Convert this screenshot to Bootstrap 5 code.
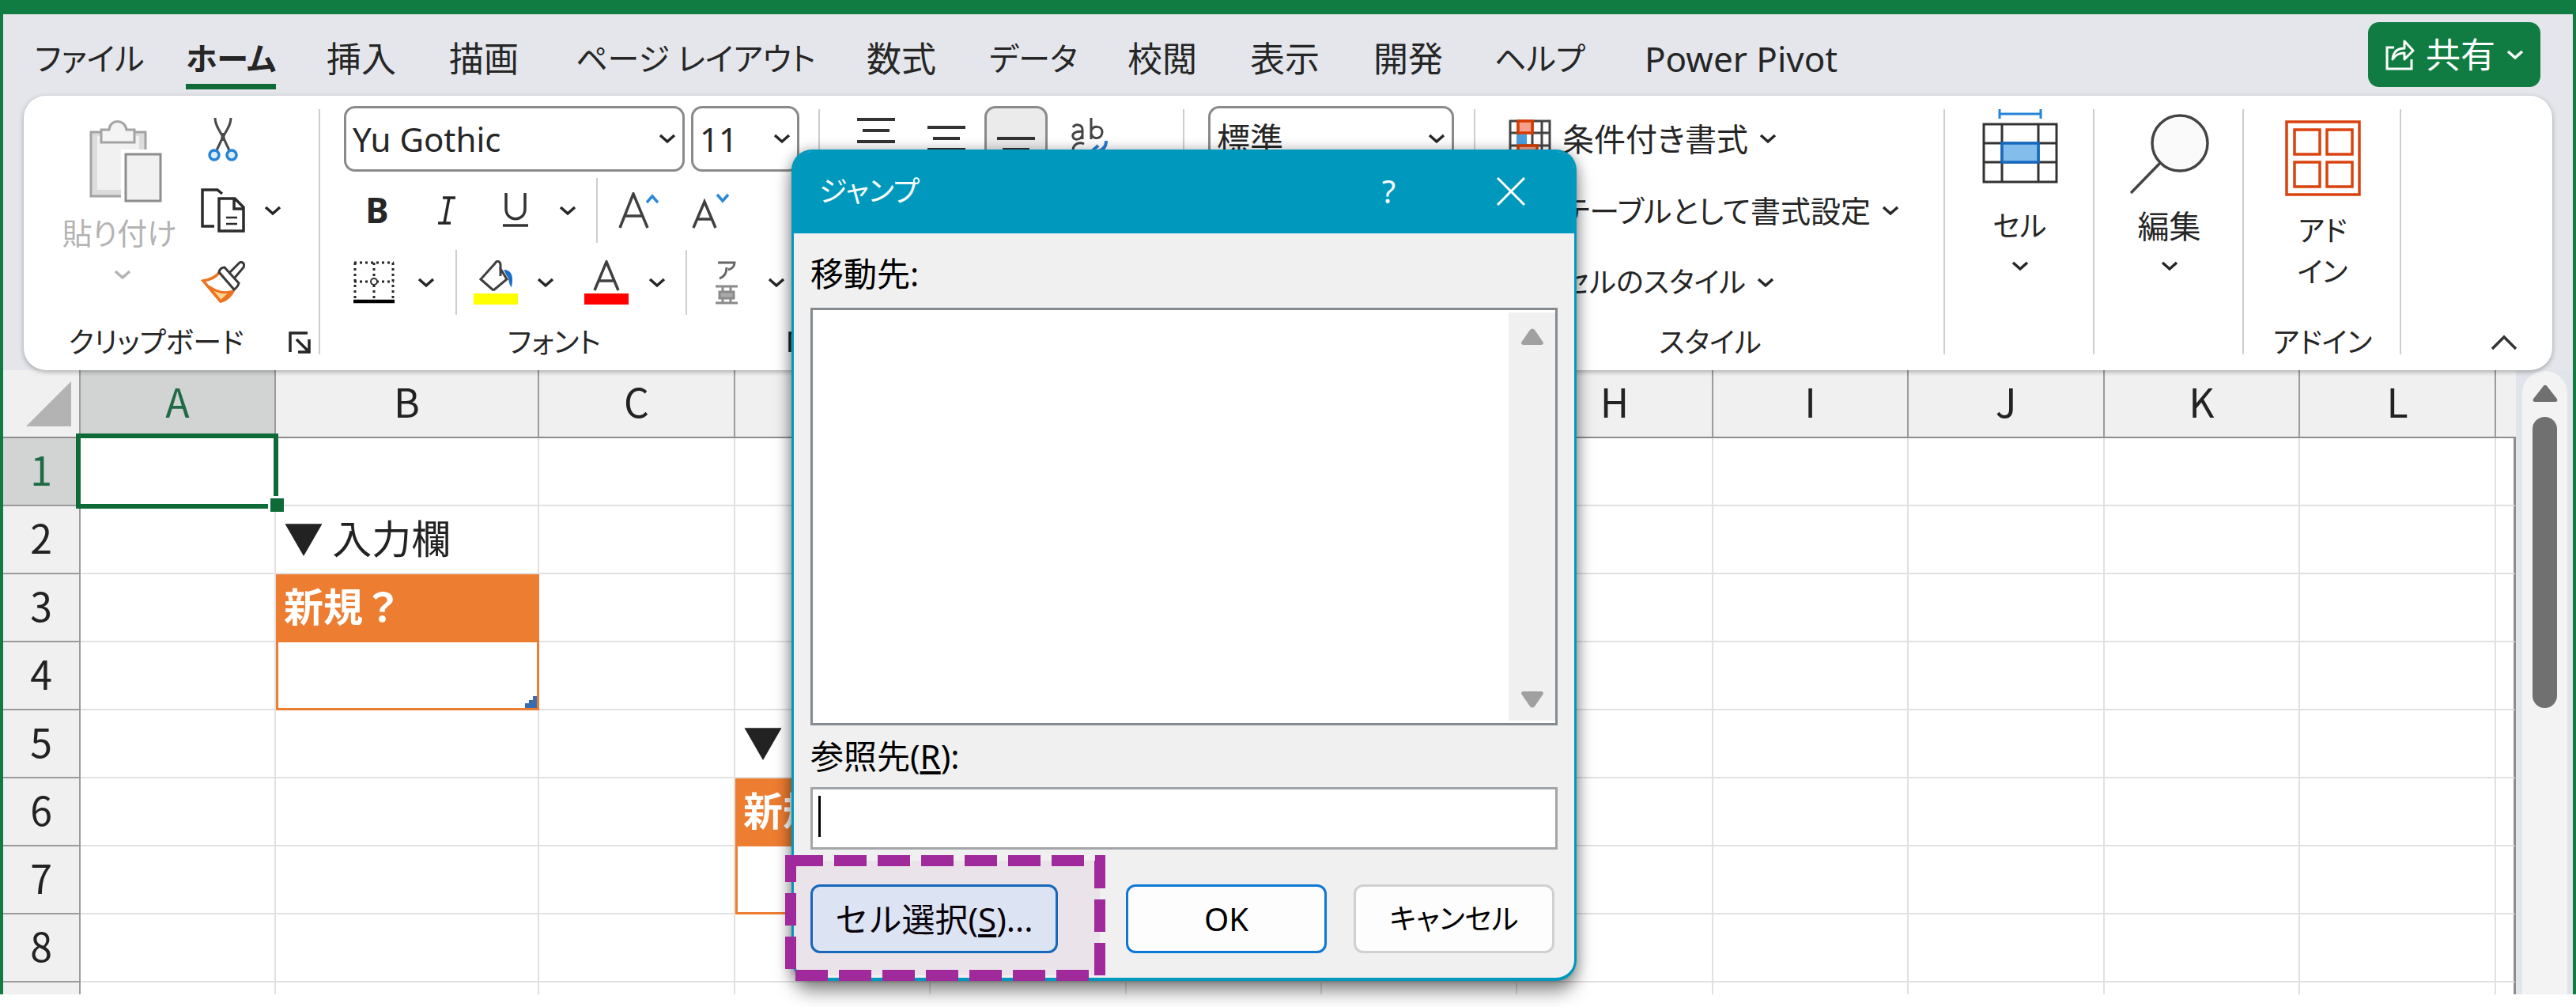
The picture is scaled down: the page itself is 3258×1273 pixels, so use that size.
<!DOCTYPE html>
<html lang="ja">
<head>
<meta charset="utf-8">
<meta name="viewport" content="width=device-width, initial-scale=1">
<title>Excel - ジャンプ</title>
<link rel="stylesheet" href="https://cdn.jsdelivr.net/npm/bootstrap@5.3.0/dist/css/bootstrap.min.css">
<script src="https://cdn.jsdelivr.net/npm/bootstrap@5.3.0/dist/js/bootstrap.bundle.min.js"></script>
<style>
body{font-family:"Noto Sans","Noto Sans CJK JP",sans-serif;font-size:40px;line-height:48px;color:#262626;background:#fff;font-feature-settings:"palt"}
button,select,input{font:inherit;color:inherit;font-feature-settings:inherit}
button{background:none;border:0;padding:0}
svg{display:block;flex:none}
.kana{font-size:36px}
.app-shell{border:4px solid #107c41;border-top-width:18px;border-bottom:0;background:#e4e6ec}
/* tab strip */
.tab-strip{height:103px;padding-right:41px}
.tab-grid{display:grid;flex:1;padding-left:40px;font-size:44px;line-height:52px;grid-template-columns:minmax(0,191fr) minmax(0,178fr) minmax(0,155fr) minmax(0,160fr) minmax(0,368fr) minmax(0,155fr) minmax(0,175fr) minmax(0,155fr) minmax(0,156fr) minmax(0,153fr) minmax(0,190fr) minmax(0,915fr)}
.tab-grid a{color:#262626;text-decoration:none;white-space:nowrap;justify-self:start;border-bottom:7px solid transparent;padding-bottom:6px;margin-top:6px}
.tab-grid a.active{font-weight:700;border-color:#0e6b38}
.tab-grid .kana{font-size:40px}
.share-btn{width:218px;height:82px;margin-top:10px;background:#107c41;color:#fff;border-radius:14px;font-size:44px;gap:14px}
/* ribbon */
.ribbon{margin:0 26px;height:347px;background:#fff;border-radius:28px;box-shadow:0 2px 6px rgba(0,0,0,.3);display:grid;grid-template-columns:375fr 632fr 461fr 368fr 594fr 189fr 189fr 199fr 191fr;position:relative;z-index:1}
.rgroup{padding:13px 0 0 30px;min-width:0;display:grid;grid-template-rows:83px 98px 84px 68px;background:linear-gradient(#cdcdcd,#cdcdcd) right 17px/2px 310px no-repeat}
.rgroup:last-child{background:none}
.rgroup>*{min-width:0}
.rlabel{display:flex;align-items:center;justify-content:center;margin-left:-30px;grid-row:4;white-space:nowrap}
.rlabel .launcher{margin-right:12px}
.rlabel .collapse-btn{margin-right:44px}
.rlabel span{flex:1;text-align:center}
.tool-row{display:grid;align-items:center;justify-items:center}
.clip-grid{grid-row:1/4;display:grid;grid-template-columns:182px 80px 46px;grid-template-rows:83px 98px 84px;align-items:center;justify-items:center}
.paste-btn{grid-row:1/4;align-self:start;padding-top:18px;color:#b3b3b3;white-space:nowrap}
.paste-btn svg:first-child{margin-left:16px}
.paste-btn span{margin-top:14px;font-size:38px}
.paste-btn .chev{margin:23px 0 0 8px}
.row-format{grid-template-columns:84px 92px 82px 50px 24px 82px 100px}
.row-color{grid-template-columns:76px 56px 20px 79px 48px 106px 22px 52px 49px 78px}
.row-format b{font-size:44px}
.vsep{width:2px;height:82px;background:#cdcdcd}
.combo{appearance:none;height:83px;border:3px solid #8a8a8a;border-radius:14px;padding:0 8px;font-size:42px;background:#fff url("data:image/svg+xml,%3Csvg xmlns='http://www.w3.org/2000/svg' width='22' height='13'%3E%3Cpath d='M2 2l9 8 9-8' fill='none' stroke='%23262626' stroke-width='3.5'/%3E%3C/svg%3E") right 8px center/22px 13px no-repeat}
.combo-font{width:431px}
.combo-size{width:137px}
.combo-number{width:311px}
.align-group{padding-left:26px}
.align-row{grid-template-columns:89px 89px 88px 96px;justify-content:start}
.align-on{width:80px;height:83px;border:3px solid #8a8a8a;border-radius:14px;background:#ebebeb}
.style-btn{display:flex;align-items:center;gap:14px;padding-left:12px;white-space:nowrap}
.table-style{font-size:38px}
.big-tool{grid-row:1/4;align-self:start;display:flex;flex-direction:column;align-items:center;margin-left:-30px;white-space:nowrap;padding-top:4px}
.big-tool span{margin-top:30px}
.big-tool .chev{margin-top:20px}
.big-find{padding-top:10px}
.big-find span{margin-top:16px}
.big-addin{padding-top:18px}
.big-addin span{margin-top:18px;line-height:52px}
/* sheet */
.sheet-area{height:789px;overflow:hidden}
.sheet-wrap{flex:1;min-width:0;background:#fff;overflow:hidden}
.sheet{width:100%;table-layout:fixed;border-collapse:separate;border-spacing:0;font-family:"Noto Sans CJK JP",sans-serif;font-size:50px;line-height:60px;color:#222;font-feature-settings:normal}
.sheet th,.sheet td{height:86px;padding:0 10px 8px;border-right:2px solid #e1e1e1;border-bottom:2px solid #e1e1e1;white-space:nowrap;overflow:visible}
.sheet th{background:#f0f0f0;font-weight:400;text-align:center;padding:0 0 8px;border-color:#9b9b9b}
.sheet th.corner{padding:0 0 0 29px}
.sheet tr:first-child th{border-bottom-color:#8d8d8d}
.sheet td:last-child{border-right:3px solid #8d8d8d}
.sheet tr:first-child th:last-child{border-right:0}
.sheet .on{background:#d2d4d3;color:#1e6b45}
.sheet td.hd{background:#ed7d31;color:#fff;font-weight:700;border-color:#ed7d31;overflow:hidden}
.sheet td.bd{border:3px solid #ed7d31;border-top:0}
.cell-sel{position:relative}
.cell-sel::before{content:"";position:absolute;inset:-6px -5px -5px -6px;border:6px solid #0e6b38}
.cell-sel::after{content:"";position:absolute;right:-12px;bottom:-9px;width:20px;height:20px;background:#0e6b38;border:solid #fff;border-width:3px 0 0 3px}
.resize-mark{position:relative}
.resize-mark svg{position:absolute;right:0;bottom:0}
.vscroll{width:72px;background:#e1e4ea;padding:1px 7px 0 8px}
.vtrack{height:820px;background:#f3f3f3;border-radius:28px 28px 0 0;padding-top:17px}
.vthumb{width:31px;height:368px;border-radius:16px;background:#6f706f;margin-top:18px}
/* dialog */
.jump{position:absolute;left:1001px;top:189px;width:993px;z-index:5;background:#f0f0f0;border:3px solid #0099bd;border-bottom-width:4px;border-radius:26px;box-shadow:0 14px 22px rgba(0,0,0,.42),0 0 16px rgba(0,0,0,.25);color:#000}
.jump-head{height:103px;background:#0099bd;color:#fff;border-radius:22px 22px 0 0;padding:0 62px 4px 32px;gap:128px}
.jump-body{padding:22px 21px 31px}
.jump-body label{display:block;height:58px;line-height:58px;font-feature-settings:normal;font-size:42px}
.list-frame{height:528px;border:3px solid #858a8f;background:#fff;margin-top:14px;padding:3px 0}
.list-frame select{flex:1;border:0;background:#fff;outline:0}
.list-bar{width:59px;background:#f0f0f0;padding:20px 0 16px}
.ref-wrap{position:relative;margin-top:10px}
.ref-box{width:100%;height:79px;border:3px solid #a3a6a9;background:#fff;padding:0 8px;border-radius:0;outline:0}
.ref-caret{position:absolute;left:10px;top:11px;width:3px;height:52px;background:#000}
.ref-label{margin-top:10px}
.jump-actions{margin-top:44px}
.dlg-btn{height:87px;width:254px;border:3px solid #d0d0d0;border-radius:12px;background:#fdfdfd;white-space:nowrap}
.dlg-btn.main{border-color:#0f78d4;margin-left:86px;margin-right:34px}
.dlg-btn.special{width:313px;border-color:#0f6cbd;background:#e1f0f9;font-size:42px;font-feature-settings:normal}
.callout{position:absolute;left:993px;top:1081px;z-index:6;pointer-events:none}
</style>
</head>
<body>
<svg width="0" height="0" class="position-absolute" aria-hidden="true">
<symbol id="chev" viewBox="0 0 22 13"><path d="M2 2l9 8 9-8" fill="none" stroke="currentColor" stroke-width="3.5"/></symbol>
<symbol id="launch" viewBox="0 0 28 28"><path d="M2 26V2h22M10 10l14 14M26 10v16H12" fill="none" stroke="#262626" stroke-width="3.5"/></symbol>
</svg>
<div class="app-shell">
<nav class="tab-strip d-flex align-items-start">
 <div class="tab-grid pt-4">
  <a href="#" class="kana">ファイル</a><a href="#" class="kana active">ホーム</a><a href="#">挿入</a><a href="#">描画</a><a href="#" class="kana">ページ レイアウト</a><a href="#">数式</a><a href="#" class="kana">データ</a><a href="#">校閲</a><a href="#">表示</a><a href="#">開発</a><a href="#" class="kana">ヘルプ</a><a href="#">Power Pivot</a>
 </div>
 <button class="share-btn d-flex align-items-center justify-content-center"><svg width="38" height="42" viewBox="0 0 38 42" fill="none" stroke="#fff" stroke-width="3"><path d="M12 12H3v27h31V27"/><path d="M10 27c1-10 7-14 15-14V4l11 12-11 11v-8c-7 0-11 2-15 8z" stroke-linejoin="round"/></svg>共有<svg width="22" height="13"><use href="#chev"/></svg></button>
</nav>
<div class="ribbon">
 <section class="rgroup">
  <div class="clip-grid">
   <button class="paste-btn d-flex flex-column align-items-center" disabled><svg width="92" height="104" viewBox="0 0 92 104"><path d="M2 15h69v81H2z" fill="#dcdcdc" stroke="#a3a3a3" stroke-width="3"/><path d="M10 20h53v68H10z" fill="#f1f1f1"/><path d="M15 28V12h10c1-14 20-14 22 0h10v16z" fill="#f4f4f4" stroke="#a3a3a3" stroke-width="3"/><path d="M40 37h52v67H40z" fill="#fff"/><path d="M46 43h44v59H46z" fill="#f1f1f1" stroke="#8d8d8d" stroke-width="3"/></svg><span>貼り付け</span><svg class="chev" width="22" height="13"><use href="#chev"/></svg></button>
   <button aria-label="切り取り"><svg width="38" height="56" viewBox="0 0 38 56" fill="none" stroke="#4a4a4a" stroke-width="3"><path d="M9 1c0 9 5 15 10 24l8 17M29 1c0 9-5 15-10 24l-8 17"/><path d="M19 20v10" stroke-width="5"/><circle cx="8" cy="48" r="6" fill="#dcecf9" stroke="#2484d6" stroke-width="3.5"/><circle cx="30" cy="48" r="6" fill="#dcecf9" stroke="#2484d6" stroke-width="3.5"/></svg></button><i></i>
   <button aria-label="コピー"><svg width="56" height="56" viewBox="0 0 56 56" fill="none" stroke="#2b2b2b" stroke-width="3.5"><path d="M17 48H2V2h19l6 5"/><path d="M23 13h20l11 11v30H23zM42 13v13h12"/><path d="M32 37h14M32 45h14" stroke-width="2.5"/></svg></button><svg width="22" height="13"><use href="#chev"/></svg>
   <button aria-label="書式のコピー"><svg width="56" height="54" viewBox="0 0 56 54"><path d="M24 14C18 21 10 24 3 25l22 26c9-2 14-8 18-17z" fill="#fff" stroke="#ed7323" stroke-width="3.5"/><path d="M10 32l15 19 14-13c-9 4-19 1-29-6z" fill="#fbd58e" stroke="#ed7323" stroke-width="3"/><path d="M30 8l18 20c-1 4-3 6-6 8L23 14c1-4 4-6 7-6zM36 15L49 2c4-2 7 2 5 6L43 21" fill="#fff" stroke="#3a3a3a" stroke-width="3"/></svg></button>
  </div>
  <div class="rlabel kana"><span>クリップボード</span><button class="launcher" aria-label="クリップボードの設定"><svg width="28" height="28"><use href="#launch"/></svg></button></div>
 </section>
 <section class="rgroup">
  <div class="d-flex gap-2">
   <select class="combo combo-font" aria-label="フォント名"><option>Yu Gothic</option></select>
   <select class="combo combo-size" aria-label="サイズ"><option>11</option></select>
  </div>
  <div class="tool-row row-format"><button><b>B</b></button><button aria-label="斜体"><svg width="24" height="36" viewBox="0 0 24 36"><path d="M7 2h16M1 34h16M15 2L9 34" fill="none" stroke="#262626" stroke-width="3.5"/></svg></button><button aria-label="下線"><svg width="32" height="44" viewBox="0 0 32 44"><path d="M4 0v20c0 17 24 17 24 0V0M0 41h32" fill="none" stroke="#333" stroke-width="3.5"/></svg></button><svg width="22" height="13"><use href="#chev"/></svg><span class="vsep"></span>
   <button aria-label="フォント サイズの拡大"><svg width="52" height="46" viewBox="0 0 52 46" fill="none" stroke="#404040" stroke-width="3.5"><path d="M2 45L19 2l18 43M8 30h23"/><path d="M36 13l7-8 7 8" stroke="#2b88d8"/></svg></button>
   <button aria-label="フォント サイズの縮小"><svg width="48" height="46" viewBox="0 0 48 46" fill="none" stroke="#404040" stroke-width="3.5"><path d="M2 45l14-33 14 33M7 34h18"/><path d="M32 3l7 8 7-8" stroke="#2b88d8"/></svg></button></div>
  <div class="tool-row row-color">
   <button aria-label="罫線"><svg width="52" height="54" viewBox="0 0 52 54"><path d="M1 2h50M1 26h50" stroke="#262626" stroke-width="3" stroke-dasharray="3 4"/><path d="M2 2v46M26 2v46M50 2v46" stroke="#262626" stroke-width="3" stroke-dasharray="3 4"/><path d="M0 51h52" stroke="#000" stroke-width="4.5"/><circle cx="26" cy="26" r="4" fill="#fff" stroke="#333" stroke-width="2"/></svg></button><svg width="22" height="13"><use href="#chev"/></svg><span class="vsep"></span>
   <button aria-label="塗りつぶしの色"><svg width="56" height="56" viewBox="0 0 56 56"><path d="M25 38L9 24 27 4c3-5 7-2 7 2v14M33 9l9 15-17 14" fill="none" stroke="#404040" stroke-width="3"/><path d="M38 12c10 0 13 8 10 22-4-3-3-12-6-14z" fill="#1a6fc4"/><path d="M0 42h56v14H0z" fill="#ff0"/></svg></button><svg width="22" height="13"><use href="#chev"/></svg>
   <button aria-label="フォントの色"><svg width="56" height="56" viewBox="0 0 56 56"><path d="M13 38L28 2l15 36M19 26h19" fill="none" stroke="#404040" stroke-width="3.5"/><path d="M0 42h56v14H0z" fill="red"/></svg></button><svg width="22" height="13"><use href="#chev"/></svg><span class="vsep"></span>
   <button aria-label="ふりがな"><svg width="28" height="56" viewBox="0 0 28 56" fill="none" stroke="#8a8a8a" stroke-width="3"><path d="M3 3h21c0 5-4 8-8 9M14 9c0 8-3 12-9 14" stroke="#666"/><path d="M0 33h28M0 54h28M9 33v20M19 33v20"/><path d="M5 40h18v8H5z" fill="#aaa"/></svg></button><svg width="22" height="13"><use href="#chev"/></svg></div>
  <div class="rlabel kana"><span>フォント</span><button class="launcher" aria-label="フォントの設定"><svg width="28" height="28"><use href="#launch"/></svg></button></div>
 </section>
 <section class="rgroup align-group">
  <div class="tool-row align-row">
   <button aria-label="上揃え"><svg width="48" height="60" viewBox="0 0 48 60" stroke="#333" stroke-width="4"><path d="M0 5h48M7 19h34M0 33h48"/></svg></button>
   <button aria-label="上下中央揃え"><svg width="48" height="60" viewBox="0 0 48 60" stroke="#333" stroke-width="4"><path d="M0 15h48M7 29h34M0 43h48"/></svg></button>
   <button class="align-on d-flex align-items-center justify-content-center" aria-label="下揃え"><svg width="48" height="60" viewBox="0 0 48 60" stroke="#333" stroke-width="4"><path d="M0 29h48M7 43h34M0 57h48"/></svg></button>
   <button aria-label="折り返し"><svg width="48" height="60" viewBox="0 0 48 60" fill="none" stroke="#444" stroke-width="3"><path d="M4 15c3-5 12-4 12 3v12M16 20C6 20 3 23 4 27s9 5 12-2M27 3v27M27 19c3-7 14-6 14 2s-11 11-14 2M18 36c-6-3-14 0-14 8s8 11 14 8"/><path d="M46 32c0 8-4 14-18 14M36 38l-9 8 9 8" stroke="#2b7cd3" stroke-width="4"/></svg></button></div>
 </section>
 <section class="rgroup"><div><select class="combo combo-number" aria-label="表示形式"><option>標準</option></select></div></section>
 <section class="rgroup">
  <button class="style-btn"><svg width="54" height="50" viewBox="0 0 54 50"><path d="M2 2h50v46H2zM2 17h50M2 33h50M12 2v46M30 2v46M42 2v46" fill="#fff" stroke="#444" stroke-width="3"/><path d="M12 2h18v15H12z" fill="#f4a08c" stroke="#d83b01" stroke-width="3.5"/><path d="M10 19h13v13H10z" fill="#4a9fe0"/><path d="M12 33h24v14H12z" fill="#f4a08c" stroke="#d83b01" stroke-width="3.5"/></svg>条件付き書式<svg width="22" height="13"><use href="#chev"/></svg></button>
  <button class="style-btn table-style"><svg width="54" height="50" viewBox="0 0 54 50"><path d="M2 2h50v46H2zM2 17h50M2 33h50M18 2v46M36 2v46" fill="#fff" stroke="#444" stroke-width="3"/></svg>テーブルとして書式設定<svg width="22" height="13"><use href="#chev"/></svg></button>
  <button class="style-btn kana"><svg width="54" height="50" viewBox="0 0 54 50"><path d="M2 2h50v46H2z" fill="#fff" stroke="#444" stroke-width="3"/></svg>セルのスタイル<svg width="22" height="13"><use href="#chev"/></svg></button>
  <div class="rlabel kana"><span>スタイル</span></div>
 </section>
 <section class="rgroup"><button class="big-tool"><svg width="96" height="94" viewBox="0 0 96 94" fill="none" stroke="#333" stroke-width="3"><path d="M22 6h52M22 0v12M74 0v12" stroke="#2484d6"/><path d="M2 19h92v73H2zM2 43h92M2 67h92M25 19v73M71 19v73"/><path d="M25 43h46v24H25z" fill="#83bdeb" stroke="#1469c0" stroke-width="3.5"/></svg><span class="kana">セル</span><svg class="chev" width="22" height="13"><use href="#chev"/></svg></button></section>
 <section class="rgroup"><button class="big-tool big-find"><svg width="100" height="102" viewBox="0 0 100 102" fill="none" stroke="#444" stroke-width="3.5"><circle cx="63" cy="37" r="35" fill="#fafafa"/><path d="M38 62L1 100"/></svg><span>編集</span><svg class="chev" width="22" height="13"><use href="#chev"/></svg></button></section>
 <section class="rgroup"><button class="big-tool big-addin"><svg width="96" height="96" viewBox="0 0 96 96" fill="none" stroke="#d9430f" stroke-width="3.5"><path d="M2 2h92v92H2zM12 12h32v31H12zM53 12h32v31H53zM12 53h32v31H12zM53 53h32v31H53z"/></svg><span class="kana">アド<br>イン</span></button><div class="rlabel kana"><span>アドイン</span></div></section>
 <section class="rgroup"><div class="rlabel justify-content-end"><button class="collapse-btn" aria-label="リボンを折りたたむ"><svg width="34" height="20" viewBox="0 0 34 20"><path d="M2 18L17 3l15 15" fill="none" stroke="#333" stroke-width="3.5"/></svg></button></div></section>
</div>
<main class="sheet-area d-flex">
 <div class="sheet-wrap">
 <table class="sheet">
  <colgroup><col style="width:98px"><col style="width:247px"><col style="width:333px"><col style="width:248px"><col style="width:247px"><col style="width:248px"><col style="width:247px"><col style="width:247px"><col style="width:248px"><col style="width:247px"><col style="width:248px"><col style="width:247px"><col style="width:248px"><col style="width:25px"></colgroup>
  <tr><th class="corner"><svg width="57" height="57"><path d="M57 0v57H0z" fill="#b3b3b3"/></svg></th><th class="on">A</th><th>B</th><th>C</th><th>D</th><th>E</th><th>F</th><th>G</th><th>H</th><th>I</th><th>J</th><th>K</th><th>L</th><th></th></tr>
  <tr><th class="on">1</th><td class="cell-sel"></td><td></td><td></td><td></td><td></td><td></td><td></td><td></td><td></td><td></td><td></td><td></td><td></td></tr>
  <tr><th>2</th><td></td><td>▼ 入力欄</td><td></td><td></td><td></td><td></td><td></td><td></td><td></td><td></td><td></td><td></td><td></td></tr>
  <tr><th>3</th><td></td><td class="hd">新規？</td><td></td><td></td><td></td><td></td><td></td><td></td><td></td><td></td><td></td><td></td><td></td></tr>
  <tr><th>4</th><td></td><td class="bd resize-mark"><svg width="15" height="15"><path d="M15 0v15H0V9h5V5h5V0z" fill="#3a6cb0"/></svg></td><td></td><td></td><td></td><td></td><td></td><td></td><td></td><td></td><td></td><td></td><td></td></tr>
  <tr><th>5</th><td></td><td></td><td></td><td>▼</td><td></td><td></td><td></td><td></td><td></td><td></td><td></td><td></td><td></td></tr>
  <tr><th>6</th><td></td><td></td><td></td><td class="hd">新規？</td><td></td><td></td><td></td><td></td><td></td><td></td><td></td><td></td><td></td></tr>
  <tr><th>7</th><td></td><td></td><td></td><td class="bd"></td><td></td><td></td><td></td><td></td><td></td><td></td><td></td><td></td><td></td></tr>
  <tr><th>8</th><td></td><td></td><td></td><td></td><td></td><td></td><td></td><td></td><td></td><td></td><td></td><td></td><td></td></tr>
  <tr><th></th><td></td><td></td><td></td><td></td><td></td><td></td><td></td><td></td><td></td><td></td><td></td><td></td><td></td></tr>
 </table>
 </div>
 <div class="vscroll"><div class="vtrack d-flex flex-column align-items-center"><svg width="32" height="23"><path d="M3 22c-3 0-3-3-1-5L13 3c2-3 4-3 6 0l11 14c2 2 2 5-1 5z" fill="#6f706f"/></svg><div class="vthumb"></div></div></div>
</main>
</div>

<div class="jump" role="dialog" aria-label="ジャンプ">
 <div class="jump-head d-flex align-items-center"><span class="me-auto kana">ジャンプ</span><button aria-label="ヘルプ">?</button><button aria-label="閉じる"><svg width="36" height="36"><path d="M1 1l34 34M35 1L1 35" stroke="#fff" stroke-width="3"/></svg></button></div>
 <form class="jump-body">
  <label for="dest">移動先:</label>
  <div class="list-frame d-flex"><select id="dest" size="10"></select><div class="list-bar d-flex flex-column align-items-center justify-content-between"><svg width="28" height="21"><path d="M11 2q3-3 6 0l11 16q0 3-3 3H3q-3 0-3-3z" fill="#a0a0a0"/></svg><svg width="28" height="21"><path d="M11 19q3 3 6 0L28 3q0-3-3-3H3Q0 0 0 3z" fill="#a0a0a0"/></svg></div></div>
  <label for="ref" class="ref-label">参照先(<u>R</u>):</label>
  <div class="ref-wrap"><input id="ref" class="ref-box" type="text"><span class="ref-caret"></span></div>
  <div class="jump-actions d-flex"><button type="button" class="dlg-btn special">セル選択(<u>S</u>)...</button><button type="button" class="dlg-btn main">OK</button><button type="button" class="dlg-btn kana">キャンセル</button></div>
 </form>
</div>
<svg class="callout" width="405" height="159" aria-hidden="true"><rect x="7" y="7" width="391" height="145" fill="#a02a9b" fill-opacity=".06" stroke="#a02a9b" stroke-width="14" stroke-dasharray="41 14"/></svg>
</body>
</html>
